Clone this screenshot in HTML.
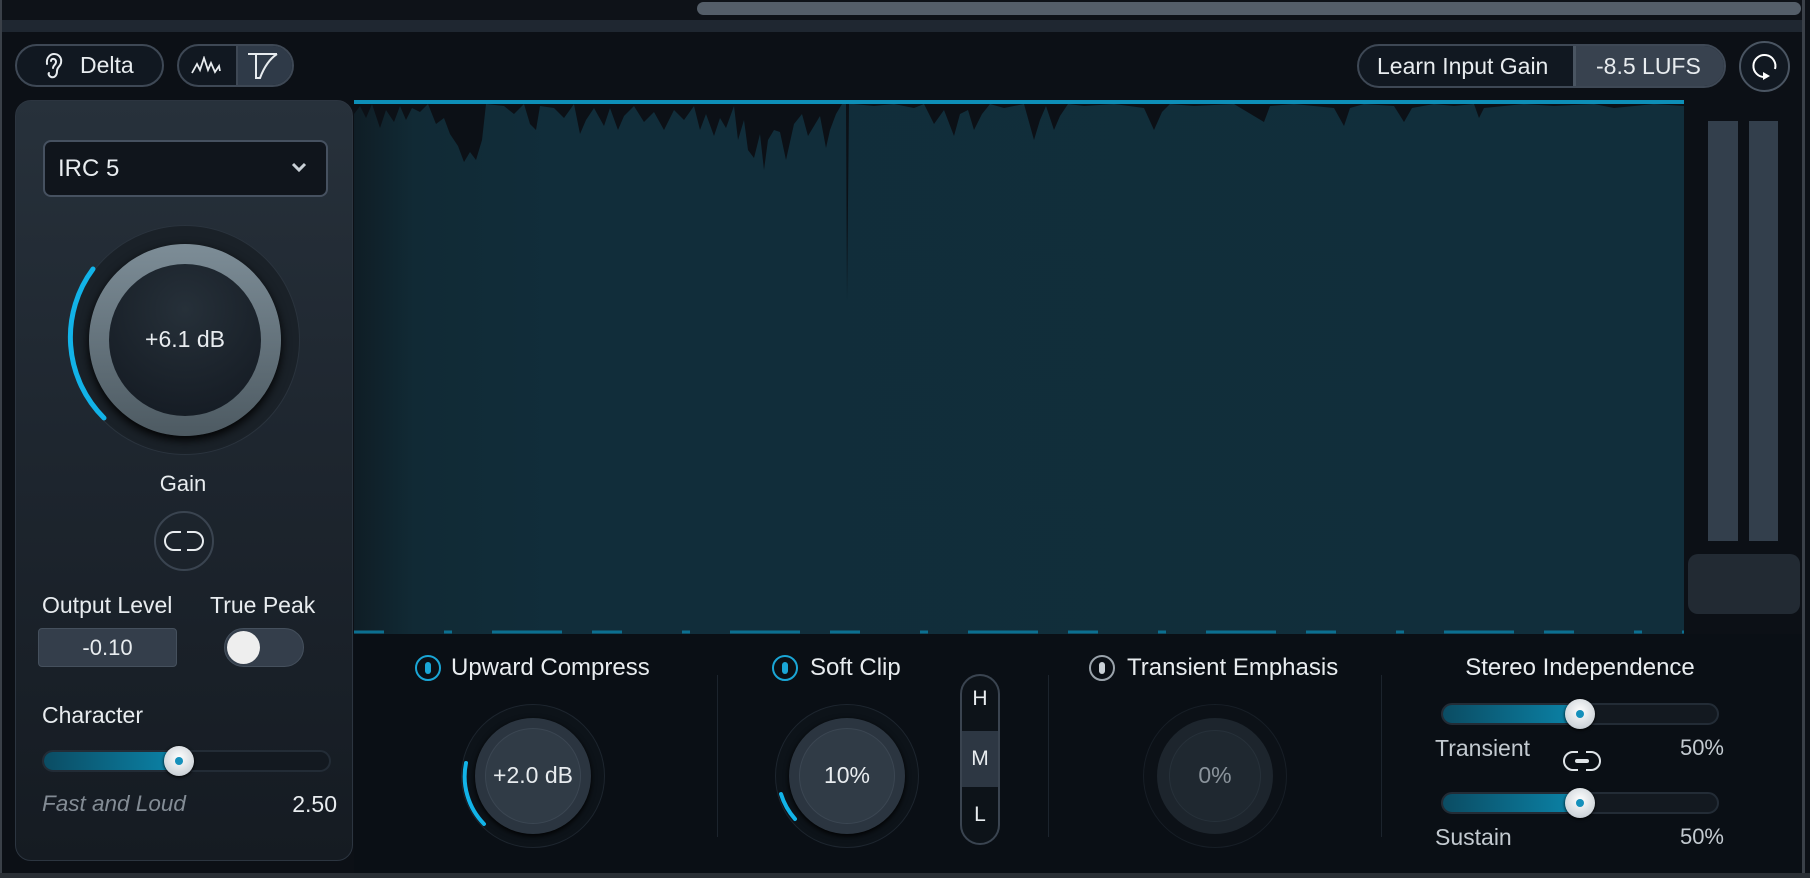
<!DOCTYPE html>
<html><head><meta charset="utf-8"><style>
*{margin:0;padding:0;box-sizing:border-box}
body{width:1810px;height:878px;background:#0c1016;position:relative;overflow:hidden;font-family:"Liberation Sans",sans-serif;color:#e8ecef}
.a{position:absolute}
.t{position:absolute;white-space:nowrap;line-height:1}
.pill{position:absolute;border:2px solid #3e4855;border-radius:30px;background:#111821}
.pw{position:absolute;width:26px;height:26px;border-radius:50%;border:2px solid #1aa6d6}
.pw::after{content:"";position:absolute;left:8px;top:5px;width:6px;height:12px;border-radius:3px;background:#1aa6d6}
.pw.g{border-color:#9aa3ab}
.pw.g::after{background:#c9d0d6}
.sep{position:absolute;width:1px;background:#1c242d;top:675px;height:162px}
.track{position:absolute;height:22px;border-radius:11px;background:#131920;border:2px solid #232c36;overflow:hidden}
.fill{position:absolute;left:0;top:0;bottom:0;background:linear-gradient(90deg,#0b4c63,#0b85aa)}
.thumb{position:absolute;width:30px;height:30px;border-radius:50%;background:radial-gradient(circle at 50% 40%,#fff,#cfd5da 70%,#9aa3aa);box-shadow:0 1px 3px #000}
.thumb::after{content:"";position:absolute;left:11px;top:11px;width:8px;height:8px;border-radius:50%;background:#1590bb}
</style></head><body>
<div class="a" style="left:0;top:0;width:1810px;height:20px;background:#0e1218"></div>
<div class="a" style="left:697px;top:2px;width:1104px;height:13px;border-radius:7px;background:#545e69"></div>
<div class="a" style="left:0;top:20px;width:1803px;height:12px;background:#1f2731"></div>
<div class="a" style="left:0;top:0;width:2px;height:878px;background:#3a4048"></div>
<div class="a" style="left:1802px;top:0;width:3px;height:878px;background:#3a4048"></div>

<div class="pill" style="left:15px;top:44px;width:149px;height:43px"></div>
<svg class="a" style="left:40px;top:52px" width="24" height="28" viewBox="0 0 24 28"><path d="M7 12 C6 5 11 2 14 2 C19 2 22 6 21 11 C20 15 17 15 17 19 C17 24 14 26 11 25 C9 24 8 22 9 21 M11 9 C11 6 16 6 16 10 C16 13 13 13 13 16" fill="none" stroke="#e8ecef" stroke-width="2" stroke-linecap="round"/></svg>
<div class="t" style="left:80px;top:54px;font-size:23px">Delta</div>
<div class="pill" style="left:177px;top:44px;width:117px;height:43px;overflow:hidden"><div class="a" style="left:57px;top:0;width:60px;height:43px;background:#2f3a48;border-left:2px solid #3e4855"></div></div>
<svg class="a" style="left:191px;top:56px" width="30" height="20" viewBox="0 0 30 20"><polyline points="1,17 6,8 9,14 13,2 17,14 20,7 24,16 28,10 29,15" fill="none" stroke="#e8ecef" stroke-width="1.8"/></svg>
<svg class="a" style="left:246px;top:52px" width="34" height="28" viewBox="0 0 34 28"><path d="M2 2 H31 M10 2 V26 H14 C17 18 22 8 31 2" fill="none" stroke="#e8ecef" stroke-width="2"/></svg>

<div class="pill" style="left:1357px;top:44px;width:369px;height:44px;overflow:hidden"><div class="a" style="left:214px;top:0;width:160px;height:44px;background:#38424f;border-left:3px solid #4a5562"></div></div>
<div class="t" style="left:1377px;top:55px;font-size:23px">Learn Input Gain</div>
<div class="t" style="left:1596px;top:55px;font-size:23px">-8.5 LUFS</div>
<div class="a" style="left:1739px;top:41px;width:51px;height:51px;border-radius:50%;border:2px solid #4a5562;background:#111821"></div>
<svg class="a" style="left:1749px;top:51px" width="32" height="32" viewBox="0 0 32 32"><path d="M16 26 A11 11 0 1 1 26 18" fill="none" stroke="#fff" stroke-width="2"/><path d="M14 21 L21 25 L14 29 Z" fill="#fff"/></svg>

<div class="a" style="left:354px;top:100px;width:1330px;height:534px;background:linear-gradient(90deg,#0f1d25 0px,#112a35 60px,#112d3a 200px,#112e3b 100%)"></div>
<svg class="a" style="left:354px;top:100px" width="1330" height="534" viewBox="0 0 1330 534">
<polygon fill="#0c1016" points="0,0 0,14 6,6 12,18 18,4 26,28 32,10 40,22 46,6 52,20 58,8 66,12 74,4 82,24 90,18 96,34 104,46 110,62 116,52 122,60 128,40 132,4 150,6 160,14 170,4 176,24 182,30 186,6 200,8 210,18 220,4 226,34 232,20 240,8 250,26 256,8 264,30 270,16 280,6 290,22 300,12 310,30 320,10 330,20 340,6 346,30 352,14 360,36 366,18 372,28 380,6 384,40 390,20 394,50 400,58 406,34 410,70 414,40 420,30 426,32 432,60 436,42 440,24 448,14 454,36 460,26 466,16 472,48 476,30 482,14 488,4 492,4 493,200 495,4 500,4 520,6 540,4 560,8 570,4 580,24 590,10 600,36 606,14 614,10 620,30 628,14 636,4 650,8 670,4 680,40 686,20 692,6 700,30 706,16 714,4 730,6 760,4 790,8 800,30 808,12 816,4 840,6 880,4 910,22 916,6 940,4 980,8 990,26 996,8 1010,4 1040,6 1050,22 1058,8 1080,4 1100,6 1120,4 1125,18 1130,8 1170,4 1200,6 1240,4 1260,8 1300,4 1330,6 1330,0"/>
<rect x="0" y="0" width="1330" height="4" fill="#0d8fb8"/>
<path d="M0 532 H1330" stroke="#0c6f90" stroke-width="3" stroke-dasharray="30 60 8 40 70 30"/>
</svg>

<div class="a" style="left:1708px;top:121px;width:30px;height:420px;background:#333f4c"></div>
<div class="a" style="left:1749px;top:121px;width:29px;height:420px;background:#333f4c"></div>
<div class="a" style="left:1688px;top:554px;width:112px;height:60px;border-radius:10px;background:#222a33"></div>

<div class="a" style="left:354px;top:634px;width:1448px;height:240px;background:#0a0f15"></div>
<div class="a" style="left:0;top:873px;width:1810px;height:5px;background:#2a2f35"></div>

<div class="a" style="left:15px;top:100px;width:338px;height:761px;border-radius:16px;background:linear-gradient(180deg,#27313b 0%,#1e262f 45%,#151b22 100%);border:1px solid #2c3540"></div>
<div class="a" style="left:43px;top:140px;width:285px;height:57px;border-radius:8px;background:#10151c;border:2px solid #465160"></div>
<div class="t" style="left:58px;top:157px;font-size:24px">IRC 5</div>
<svg class="a" style="left:290px;top:160px" width="18" height="14" viewBox="0 0 18 14"><path d="M3 4 L9 10 L15 4" fill="none" stroke="#c9d0d6" stroke-width="3"/></svg>

<div class="a" style="left:70px;top:225px;width:230px;height:230px;border-radius:50%;background:#1a2128;border:1px solid #2a333d"></div>
<div class="a" style="left:89px;top:244px;width:192px;height:192px;border-radius:50%;background:linear-gradient(180deg,#7d8d97,#4d5a62);box-shadow:0 4px 10px #000"></div>
<div class="a" style="left:109px;top:264px;width:152px;height:152px;border-radius:50%;background:radial-gradient(circle at 50% 30%,#263039,#121820)"></div>
<svg class="a" style="left:60px;top:215px" width="250" height="250" viewBox="0 0 250 250"><path d="M33 54 A114 114 0 0 0 44 203" fill="none" stroke="#12b3e8" stroke-width="5" stroke-linecap="round"/></svg>
<div class="t" style="left:85px;top:328px;width:200px;text-align:center;font-size:23px">+6.1 dB</div>
<div class="t" style="left:133px;top:473px;width:100px;text-align:center;font-size:22px">Gain</div>
<div class="a" style="left:154px;top:511px;width:60px;height:60px;border-radius:50%;border:2px solid #3a4450"></div>
<svg class="a" style="left:164px;top:529px" width="40" height="24" viewBox="0 0 40 24"><path d="M17 3 H10 A9 9 0 0 0 10 21 H17 M23 3 H30 A9 9 0 0 1 30 21 H23" fill="none" stroke="#e8ecef" stroke-width="2"/></svg>
<div class="t" style="left:42px;top:594px;font-size:23px">Output Level</div>
<div class="t" style="left:210px;top:594px;font-size:23px">True Peak</div>
<div class="a" style="left:38px;top:628px;width:139px;height:39px;border-radius:4px;background:#343e4b;border:1px solid #45505d"></div>
<div class="t" style="left:38px;top:637px;width:139px;text-align:center;font-size:22px">-0.10</div>
<div class="a" style="left:224px;top:628px;width:80px;height:39px;border-radius:20px;background:#343e4b;border:1px solid #45505d"></div>
<div class="a" style="left:227px;top:631px;width:33px;height:33px;border-radius:50%;background:#eeeeee"></div>
<div class="t" style="left:42px;top:704px;font-size:23px">Character</div>
<div class="track" style="left:42px;top:750px;width:289px"><div class="fill" style="width:137px"></div></div>
<div class="thumb" style="left:164px;top:746px"></div>
<div class="t" style="left:42px;top:793px;font-size:22.5px;font-style:italic;color:#838c95">Fast and Loud</div>
<div class="t" style="left:250px;top:793px;width:87px;text-align:right;font-size:23px">2.50</div>

<div class="sep" style="left:717px"></div>
<div class="sep" style="left:1048px"></div>
<div class="sep" style="left:1381px"></div>

<div class="pw" style="left:415px;top:655px"></div>
<div class="t" style="left:451px;top:656px;font-size:24px">Upward Compress</div>
<div class="a" style="left:461px;top:704px;width:144px;height:144px;border-radius:50%;background:#0d1319;border:1px solid #1d252e"></div>
<div class="a" style="left:475px;top:718px;width:116px;height:116px;border-radius:50%;background:#2b3540;box-shadow:0 2px 6px #000"></div>
<div class="a" style="left:485px;top:728px;width:96px;height:96px;border-radius:50%;background:#303b46;border:1px solid #3b4652"></div>
<svg class="a" style="left:453px;top:696px" width="160" height="160" viewBox="0 0 160 160"><path d="M13 67 A68 68 0 0 0 31 128" fill="none" stroke="#12b3e8" stroke-width="4" stroke-linecap="round"/></svg>
<div class="t" style="left:463px;top:764px;width:140px;text-align:center;font-size:23px">+2.0 dB</div>

<div class="pw" style="left:772px;top:655px"></div>
<div class="t" style="left:810px;top:656px;font-size:24px">Soft Clip</div>
<div class="a" style="left:775px;top:704px;width:144px;height:144px;border-radius:50%;background:#0d1319;border:1px solid #1d252e"></div>
<div class="a" style="left:789px;top:718px;width:116px;height:116px;border-radius:50%;background:#2b3540;box-shadow:0 2px 6px #000"></div>
<div class="a" style="left:799px;top:728px;width:96px;height:96px;border-radius:50%;background:#303b46;border:1px solid #3b4652"></div>
<svg class="a" style="left:767px;top:696px" width="160" height="160" viewBox="0 0 160 160"><path d="M14 98 A68 68 0 0 0 28 123" fill="none" stroke="#12b3e8" stroke-width="4" stroke-linecap="round"/></svg>
<div class="t" style="left:777px;top:764px;width:140px;text-align:center;font-size:23px">10%</div>

<div class="a" style="left:960px;top:674px;width:40px;height:171px;border-radius:20px;border:2px solid #3a4450;background:#0d1319;overflow:hidden"><div class="a" style="left:0;top:55px;width:40px;height:56px;background:#2d3743"></div></div>
<div class="t" style="left:960px;top:688px;width:40px;text-align:center;font-size:21px">H</div>
<div class="t" style="left:960px;top:748px;width:40px;text-align:center;font-size:21px">M</div>
<div class="t" style="left:960px;top:804px;width:40px;text-align:center;font-size:21px">L</div>

<div class="pw g" style="left:1089px;top:655px"></div>
<div class="t" style="left:1127px;top:656px;font-size:24px">Transient Emphasis</div>
<div class="a" style="left:1143px;top:704px;width:144px;height:144px;border-radius:50%;background:#0c1117;border:1px solid #171e26"></div>
<div class="a" style="left:1157px;top:718px;width:116px;height:116px;border-radius:50%;background:#1d252d"></div>
<div class="a" style="left:1169px;top:730px;width:92px;height:92px;border-radius:50%;background:#1f2830;border:1px solid #27313a"></div>
<div class="t" style="left:1145px;top:764px;width:140px;text-align:center;font-size:23px;color:#8a939b">0%</div>

<div class="t" style="left:1430px;top:656px;width:300px;text-align:center;font-size:24px">Stereo Independence</div>
<div class="track" style="left:1441px;top:703px;width:278px"><div class="fill" style="width:138px"></div></div>
<div class="thumb" style="left:1565px;top:699px"></div>
<div class="t" style="left:1435px;top:737px;font-size:23px;color:#c3cad0">Transient</div>
<div class="t" style="left:1650px;top:737px;width:74px;text-align:right;font-size:22px;color:#c3cad0">50%</div>
<svg class="a" style="left:1562px;top:749px" width="40" height="24" viewBox="0 0 40 24"><path d="M16 3 H11 A9 9 0 0 0 11 21 H16 M24 3 H29 A9 9 0 0 1 29 21 H24" fill="none" stroke="#dfe4e8" stroke-width="2"/><rect x="13" y="10" width="14" height="4" rx="2" fill="#dfe4e8"/></svg>
<div class="track" style="left:1441px;top:792px;width:278px"><div class="fill" style="width:138px"></div></div>
<div class="thumb" style="left:1565px;top:788px"></div>
<div class="t" style="left:1435px;top:826px;font-size:23px;color:#c3cad0">Sustain</div>
<div class="t" style="left:1650px;top:826px;width:74px;text-align:right;font-size:22px;color:#c3cad0">50%</div>
</body></html>
